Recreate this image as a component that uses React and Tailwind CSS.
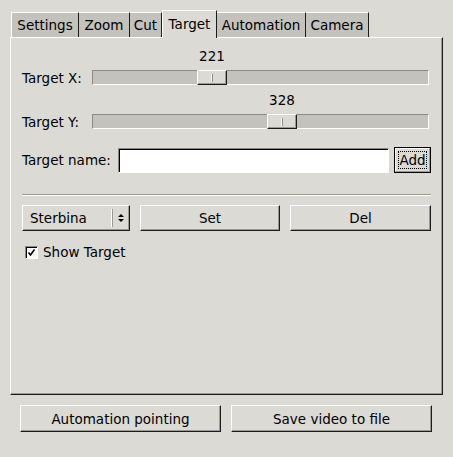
import React, { useState } from 'react';

const tabs = [
  { name: 'Settings', w: 'w-[68px]' },
  { name: 'Zoom', w: 'w-[51px]' },
  { name: 'Cut', w: 'w-[32px]' },
  { name: 'Target', w: 'w-[55px]' },
  { name: 'Automation', w: 'w-[89px]' },
  { name: 'Camera', w: 'w-[63px]' },
];

const raised =
  'border border-t-white border-l-white border-r-[#1c1c1c] border-b-[#1c1c1c] shadow-[inset_-1px_-1px_0_#9b9994] bg-[#dcdad5]';

function Button({ children, className = '' }) {
  return (
    <button className={`${raised} flex items-center justify-center leading-4 ${className}`}>
      {children}
    </button>
  );
}

// Horizontal slider with the value printed above the handle
function Slider({ label, value, offset, className = '' }) {
  return (
    <div className={`flex flex-col ${className}`}>
      <div className="h-[16px] mb-[6px] flex leading-4">
        <div className="w-[30px] text-center" style={{ marginLeft: 70 + offset }}>
          {value}
        </div>
      </div>
      <div className="flex items-center h-[15px]">
        <div className="w-[70px] leading-4">{label}</div>
        <div className="relative flex-1 mr-[2px] h-[15px] bg-[#c4c2bd] border border-t-[#8c8a85] border-l-[#8c8a85] border-r-white border-b-white">
          <div
            className={`absolute top-[-1px] h-[15px] w-[30px] ${raised} flex items-center justify-center`}
            style={{ left: offset - 1 }}
          >
            <div className="h-[8px] w-[2px] border-l border-l-white border-r border-r-[#8c8a85]" />
          </div>
        </div>
      </div>
    </div>
  );
}

export default function App() {
  const [active] = useState('Target');
  const [showTarget, setShowTarget] = useState(true);

  return (
    <div
      className="w-[453px] h-[457px] bg-[#dcdad5] pt-[10px] pl-[10px] text-black text-[13.5px]"
      style={{ fontFamily: '"DejaVu Sans", sans-serif' }}
    >
      {/* Tab bar */}
      <div className="flex items-end h-[27px] ml-[1px]">
        {tabs.map((t, i) =>
          t.name === active ? (
            <div
              key={t.name}
              className={`${t.w} relative z-10 h-[28px] -mb-px bg-[#dcdad5] border-l border-t border-r border-l-white border-t-white border-r-[#1c1c1c] flex items-center justify-center pb-[2px] leading-4`}
            >
              {t.name}
            </div>
          ) : (
            <div
              key={t.name}
              className={`${t.w} h-[25px] bg-[#c4c2bd] border-t border-t-white border-r border-r-[#1c1c1c] ${i === 0 ? 'border-l border-l-white' : ''} flex items-center justify-center leading-4`}
            >
              {t.name}
            </div>
          )
        )}
      </div>

      {/* Tab panel */}
      <div className="w-[433px] h-[358px] border border-t-white border-l-white border-r-[#1c1c1c] border-b-[#1c1c1c] shadow-[inset_-1px_-1px_0_#9b9994] pt-[10px] pl-[11px] pr-[11px] flex flex-col">
        <Slider label="Target X:" value={221} offset={105} className="mb-[7px]" />
        <Slider label="Target Y:" value={328} offset={175} />

        <div className="flex items-center mt-[18px] h-[26px]">
          <div className="w-[96px] leading-4">Target name:</div>
          <input
            className="w-[271px] h-[25px] bg-white border border-t-[#8c8a85] border-l-[#8c8a85] border-r-white border-b-white shadow-[inset_1px_1px_0_#000] outline-none px-1"
            defaultValue=""
          />
          <button className="ml-[5px] w-[37px] h-[26px] border border-black bg-[#dcdad5] p-0">
            <div className="h-full w-full border border-t-white border-l-white border-r-[#9b9994] border-b-[#9b9994] p-[2px]">
              <div className="h-full w-full border border-dotted border-black flex items-center justify-center leading-4">
                Add
              </div>
            </div>
          </button>
        </div>

        <div className="mt-[21px] h-[2px] border-t border-t-[#9b9994] border-b border-b-white" />

        <div className="flex items-center gap-[10px] mt-[9px] h-[26px]">
          <div className={`${raised} w-[108px] h-[26px] flex items-center pl-[7px]`}>
            <span className="flex-1 leading-4">Sterbina</span>
            <div className="h-[18px] w-[2px] border-l border-l-white border-r border-r-[#9b9994]" />
            <svg width="14" height="14" viewBox="0 0 14 14" className="mx-[1px]">
              <path d="M7 3 L10 6 L4 6 Z" fill="#000" />
              <path d="M4 8 L10 8 L7 11 Z" fill="#000" />
            </svg>
          </div>
          <Button className="w-[140px] h-[26px]">Set</Button>
          <Button className="w-[141px] h-[26px]">Del</Button>
        </div>

        <label className="flex items-center mt-[13px] h-[16px] cursor-pointer" onClick={() => setShowTarget(!showTarget)}>
          <div className="ml-[3px] w-[13px] h-[13px] bg-white border border-t-[#8c8a85] border-l-[#8c8a85] border-r-white border-b-white shadow-[inset_1px_1px_0_#000] flex items-center justify-center">
            {showTarget && (
              <svg width="9" height="9" viewBox="0 0 9 9">
                <path d="M1.5 4.5 L3.5 7 L7.5 1.5" stroke="#000" strokeWidth="1.6" fill="none" />
              </svg>
            )}
          </div>
          <span className="ml-[5px] leading-4">Show Target</span>
        </label>
      </div>

      {/* Bottom buttons */}
      <div className="flex gap-[10px] mt-[10px] ml-[10px]">
        <Button className="w-[201px] h-[27px]">Automation pointing</Button>
        <Button className="w-[201px] h-[27px]">Save video to file</Button>
      </div>
    </div>
  );
}
